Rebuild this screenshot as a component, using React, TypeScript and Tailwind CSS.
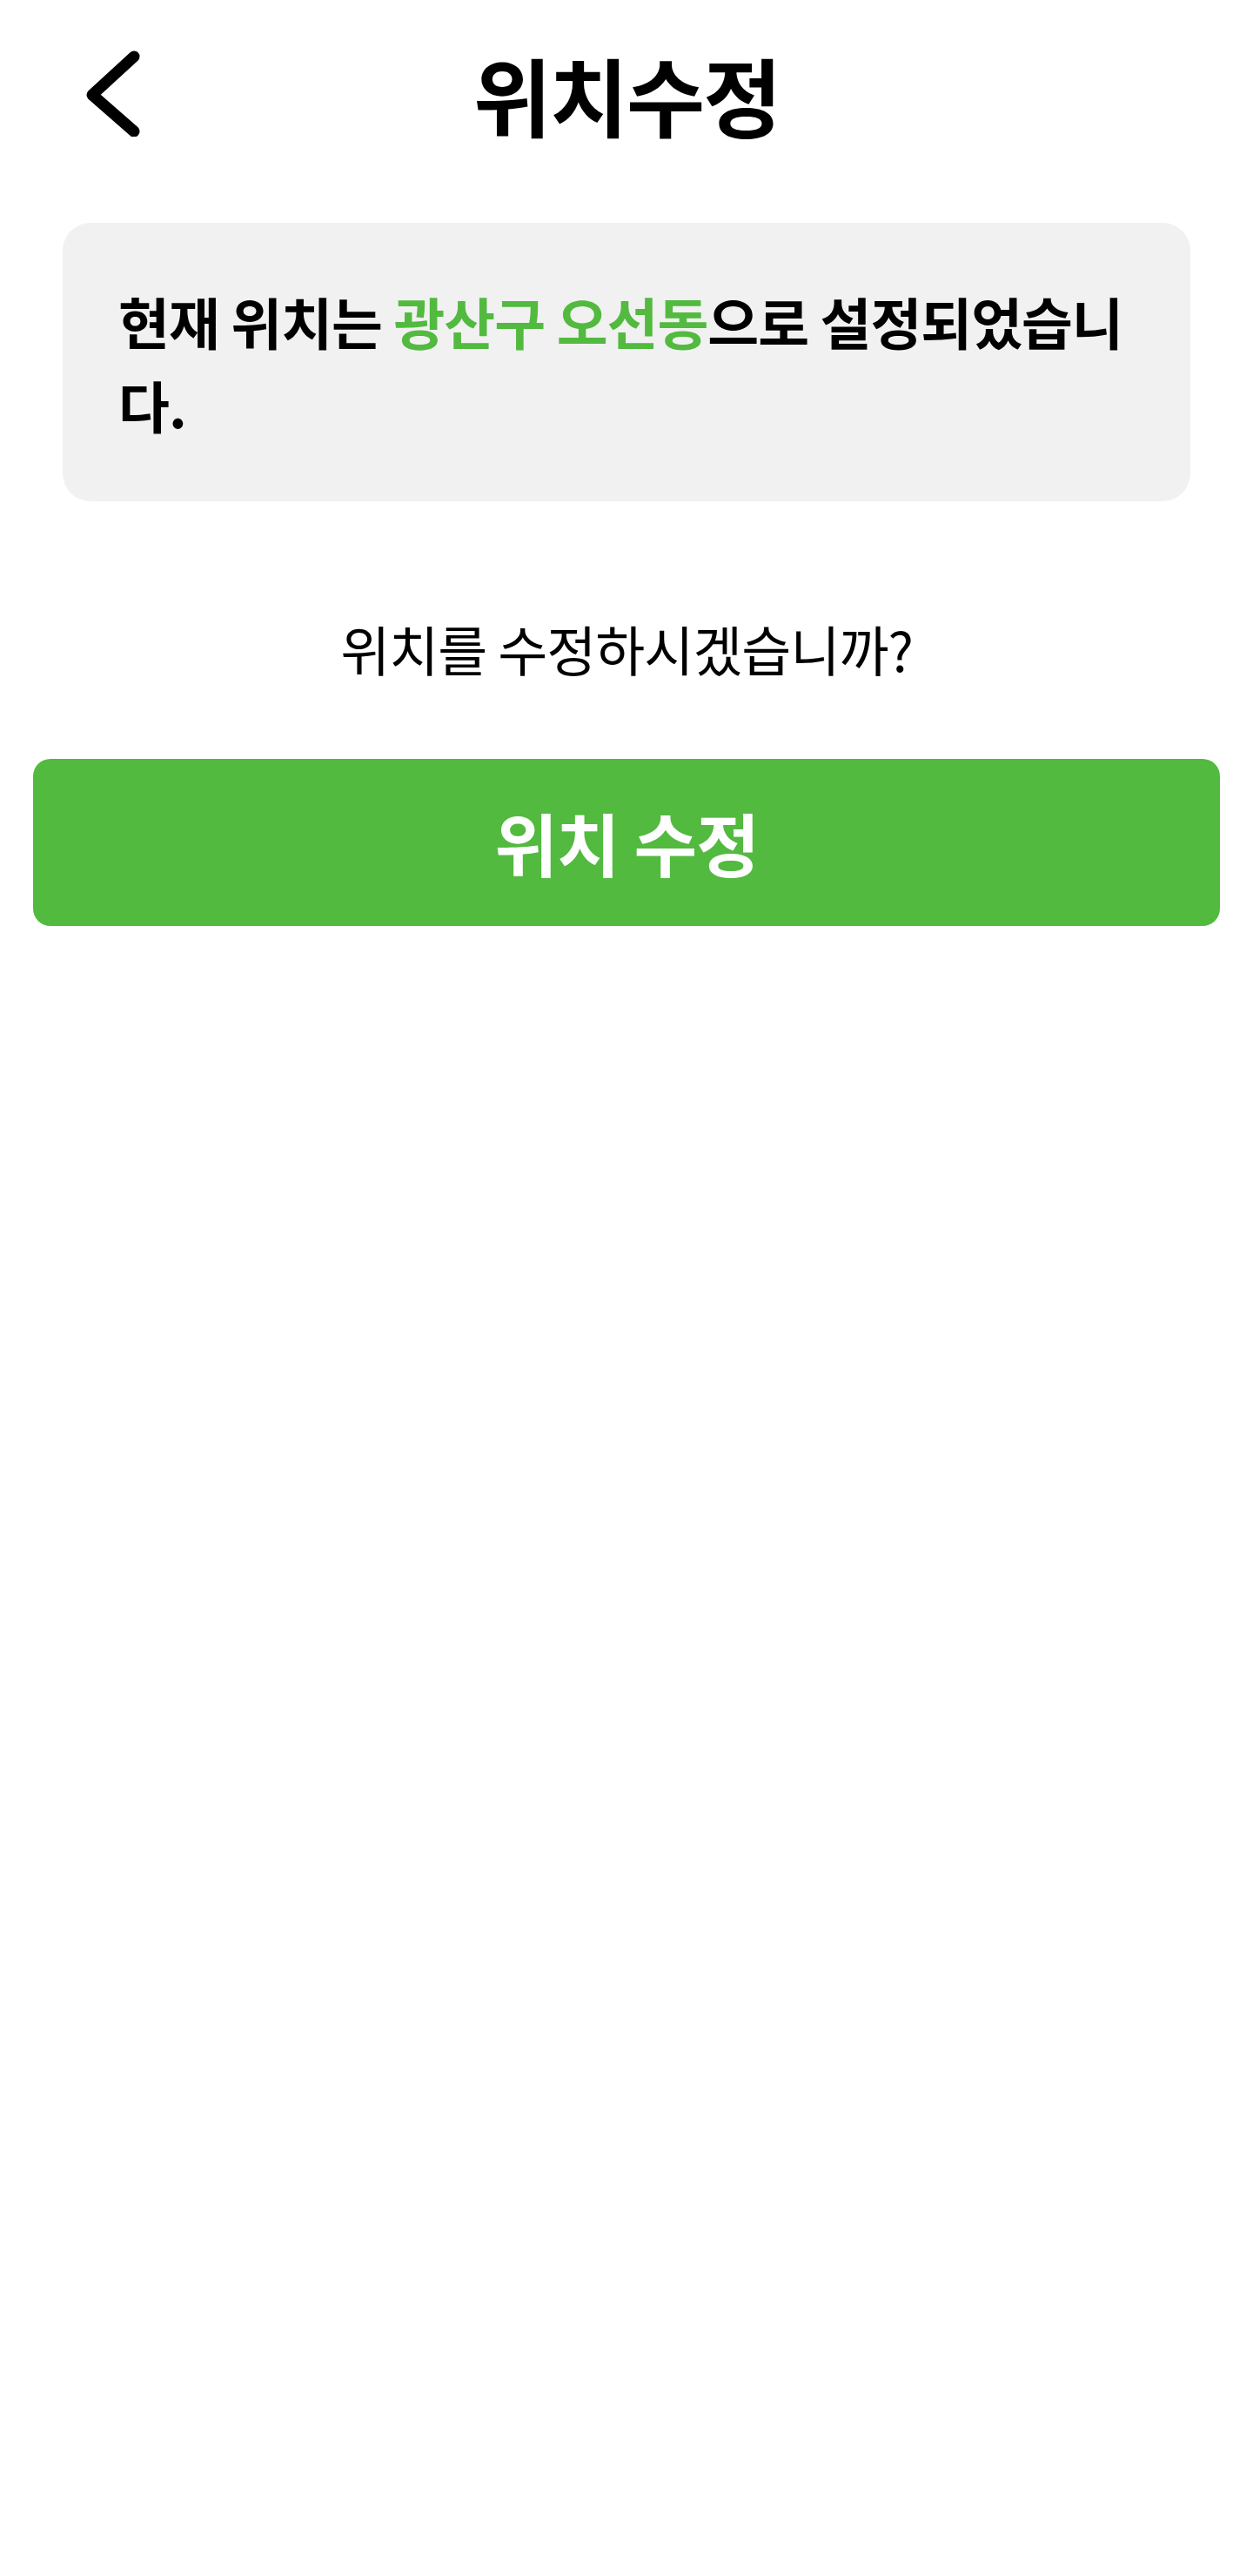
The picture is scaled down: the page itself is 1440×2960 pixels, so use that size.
export default function App() {
  const font = { fontFamily: '"Noto Sans CJK KR", "Noto Sans", sans-serif' }

  return (
    <div className="min-h-[2960px] w-full bg-white text-black" style={font}>
      {/* header */}
      <div className="grid h-[214px] grid-cols-[1fr_auto_1fr] items-center">
        <button className="flex items-center justify-start pl-[98px]" aria-label="back">
          <svg width="64" height="100" viewBox="0 0 64 100" fill="none">
            <path
              d="M56 8 L8 52 L56 94"
              stroke="#000"
              strokeWidth="13"
              strokeLinecap="round"
              strokeLinejoin="round"
            />
          </svg>
        </button>
        <h1 className="text-[98px] font-bold leading-none tracking-[-2px]">위치수정</h1>
        <div />
      </div>

      {/* current location card */}
      <div className="mx-[72px] mt-[42px] rounded-[32px] bg-[#f1f1f1] px-16 py-16">
        <p className="text-[64px] font-semibold leading-[96px] tracking-[-1px]">
          현재 위치는 <span className="text-[#52ba3f]">광산구 오선동</span>으로 설정되었습니다.
        </p>
      </div>

      <p className="mt-[129px] text-center text-[62px] font-normal leading-[80px] tracking-[-1px]">
        위치를 수정하시겠습니까?
      </p>

      <div className="mx-[38px] mt-[87px]">
        <button className="flex h-[192px] w-full items-center justify-center rounded-[20px] bg-[#52ba3f] text-[79px] font-bold tracking-[-1px] text-white">
          위치 수정
        </button>
      </div>
    </div>
  )
}
